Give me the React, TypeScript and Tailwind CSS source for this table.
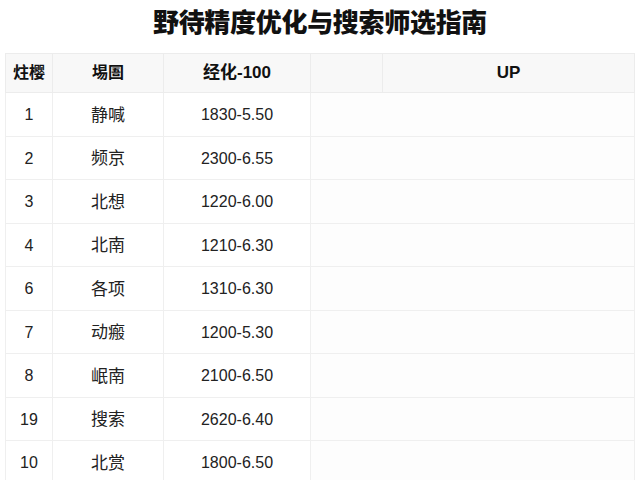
const ROWS = [
  { no: "1", name: "静喊", range: "1830-5.50" },
  { no: "2", name: "频京", range: "2300-6.55" },
  { no: "3", name: "北想", range: "1220-6.00" },
  { no: "4", name: "北南", range: "1210-6.30" },
  { no: "6", name: "各项", range: "1310-6.30" },
  { no: "7", name: "动瘢", range: "1200-5.30" },
  { no: "8", name: "岷南", range: "2100-6.50" },
  { no: "19", name: "搜索", range: "2620-6.40" },
  { no: "10", name: "北赏", range: "1800-6.50" },
];

const font = "font-['Liberation_Sans','Noto_Sans_CJK_SC',sans-serif]";

export default function App() {
  return (
    <div className={`h-[480px] w-[640px] overflow-hidden bg-white text-[#1a1a1a] ${font}`}>
      <h1 className="pt-[7px] text-center text-[26px] leading-[33px] font-black tracking-[-0.3px] text-[#111]">
        野待精度优化与搜索师选指南
      </h1>
      <div className="px-[5px] pt-[13px]">
        <table className="w-full table-fixed border-collapse">
          <colgroup>
            <col className="w-[47px]" />
            <col className="w-[111px]" />
            <col className="w-[147px]" />
            <col className="w-[72px]" />
            <col />
          </colgroup>
          <thead>
            <tr className="h-[39px] bg-[#f8f8f8] text-[16px] font-bold text-[#111]">
              <th className="border border-[#ececec]">炷樱</th>
              <th className="border border-[#ececec]">埸圄</th>
              <th className="border border-[#ececec] text-[17px]">经化-100</th>
              <th className="border border-[#ececec]"></th>
              <th className="border border-[#ececec] text-[17px]">UP</th>
            </tr>
          </thead>
          <tbody>
            {ROWS.map((r) => (
              <tr key={r.no} className="h-[43.5px] text-[16px] text-[#222]">
                <td className="border border-[#efefef] pt-[2px] text-center">{r.no}</td>
                <td className="border border-[#efefef] pt-[2px] text-center text-[17px]">{r.name}</td>
                <td className="border border-[#efefef] pt-[2px] text-center">{r.range}</td>
                <td colSpan={2} className="border border-[#efefef] bg-[#fdfdfd]"></td>
              </tr>
            ))}
          </tbody>
        </table>
      </div>
    </div>
  );
}
